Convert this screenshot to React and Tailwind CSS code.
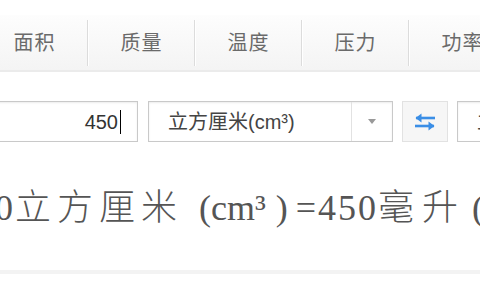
import React from "react";

const tabs = ["面积", "质量", "温度", "压力", "功率"];

function SwapIcon() {
  return (
    <svg width="24" height="20" viewBox="0 0 24 20" fill="none">
      <path d="M3 6 L22 6" stroke="#3a8ee6" strokeWidth="2.6" />
      <path d="M8.5 1.5 L2.5 6 L8.5 10.5 Z" fill="#3a8ee6" />
      <path d="M2 14 L21 14" stroke="#3a8ee6" strokeWidth="2.6" />
      <path d="M15.5 9.5 L21.5 14 L15.5 18.5 Z" fill="#3a8ee6" />
    </svg>
  );
}

function UnitSelect({ label }) {
  return (
    <div className="shrink-0 w-[245px] h-[41px] flex border border-[#c9c9c9] bg-white shadow-[inset_0_1px_2px_rgba(0,0,0,0.08)]">
      <div className="flex-1 flex items-center pl-[19px] text-[20px] text-[#444] whitespace-nowrap overflow-hidden">
        {label}
      </div>
      <div className="w-[41px] flex items-center justify-center border-l border-[#e2e2e2]">
        <span className="block w-0 h-0 border-l-[4px] border-r-[4px] border-t-[5px] border-l-transparent border-r-transparent border-t-[#999]"></span>
      </div>
    </div>
  );
}

export default function App() {
  return (
    <div
      className="w-[480px] h-[300px] bg-white overflow-hidden"
      style={{ fontFamily: '"Liberation Sans", "Noto Sans CJK SC", sans-serif' }}
    >
      <div className="pt-[15px]">
        <div className="h-[57px] bg-gradient-to-b from-[#fdfdfd] to-[#f4f4f4] border-b-2 border-[#ebebeb] flex items-center -ml-[18px]">
          {tabs.map((t) => (
            <div key={t} className="shrink-0 flex items-center">
              <div className="w-[105px] text-center text-[20px] tracking-[1px] text-[#6a6a6a]">
                {t}
              </div>
              <div className="flex h-[46px]">
                <span className="w-px bg-[#dcdcdc]"></span>
                <span className="w-px bg-white"></span>
              </div>
            </div>
          ))}
        </div>
      </div>

      <div className="mt-[29px] flex items-center -ml-[10px]">
        <div className="shrink-0 w-[148px] h-[41px] border border-[#c9c9c9] bg-white shadow-[inset_0_1px_2px_rgba(0,0,0,0.08)] flex items-center justify-end pr-[16px] text-[20px] text-[#333]">
          450
          <span className="ml-[2px] w-px h-[24px] bg-black"></span>
        </div>
        <div className="ml-[10px]">
          <UnitSelect label="立方厘米(cm³)" />
        </div>
        <div className="ml-[9px] shrink-0 w-[46px] h-[41px] border border-[#e2e2e2] bg-[#f6f6f6] flex items-center justify-center">
          <SwapIcon />
        </div>
        <div className="ml-[9px]">
          <UnitSelect label="立方厘米(cm³)" />
        </div>
      </div>

      <div
        className="mt-[46px] h-[40px] flex items-center whitespace-nowrap -ml-[45px] text-[36px] text-[#555]"
        style={{ fontFamily: '"Liberation Serif", "Noto Sans CJK SC", serif' }}
      >
        <span className="tracking-[2px]">450</span>
        <span className="tracking-[6px] font-light">立方厘米</span>
        <span className="ml-[16px]">(cm³</span>
        <span className="ml-[10px]">)</span>
        <span className="ml-[8px] tracking-[2px]">=450</span>
        <span className="tracking-[8px] font-light">毫升</span>
        <span className="ml-[6px]">(mL)</span>
      </div>

      <div className="mt-[42px] h-[4px] bg-[#f3f3f3]"></div>
    </div>
  );
}
